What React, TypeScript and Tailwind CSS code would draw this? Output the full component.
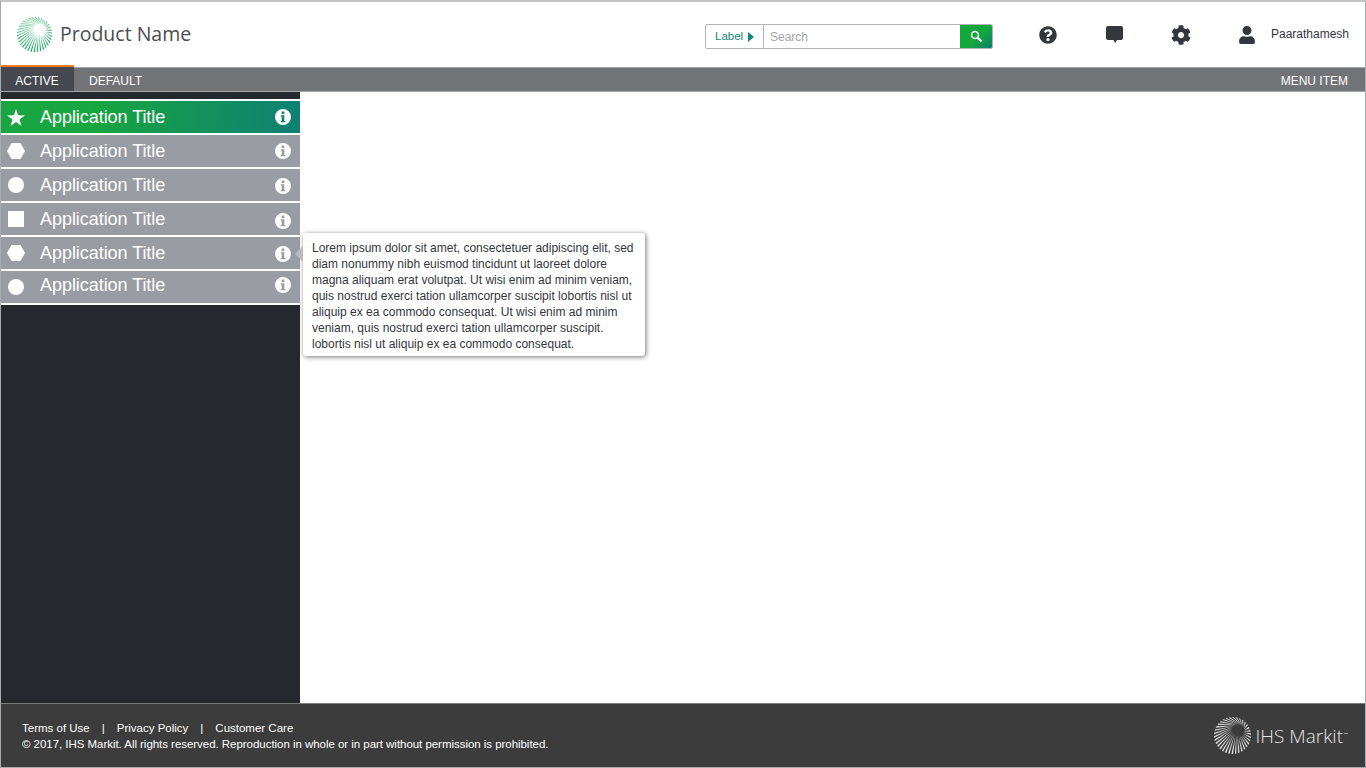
import React from "react";
import {FaCog, FaQuestionCircle, FaUser} from "react-icons/fa";

// sunburst mark used for the product logo and the footer logo
function Burst({size, className, color}: {size: number; className?: string; color: string}) {
    const rays = Array.from({length: 34}, (_, i) => {
        const a = (i / 34) * Math.PI * 2 - 1.0;
        const inner = a + 0.5;
        const w = 0.04;
        return [
            [23 + 5.4 * Math.cos(inner), 12.5 + 5.4 * Math.sin(inner)],
            [17.5 + 17.5 * Math.cos(a - w), 17.5 + 17.5 * Math.sin(a - w)],
            [17.5 + 17.5 * Math.cos(a + w), 17.5 + 17.5 * Math.sin(a + w)],
        ]
            .map((p) => p.join(","))
            .join(" ");
    });
    return (
        <svg width={size} height={size} viewBox="0 0 35 35" className={className} fill={color}>
            <defs>
                <linearGradient id="burstGreen" gradientUnits="userSpaceOnUse" x1="5" y1="0" x2="22" y2="35">
                    <stop offset="0" stopColor="#74c98f" />
                    <stop offset="1" stopColor="#14a564" />
                </linearGradient>
            </defs>
            {rays.map((points, i) => (
                <polygon key={i} points={points} />
            ))}
        </svg>
    );
}

function Hexagon() {
    return (
        <svg width="18" height="16" viewBox="0 0 18 16" fill="white" className="shrink-0">
            <polygon points="4.5,0 13.500,0 18,8 13.500,16 4.5,16 0,8" />
        </svg>
    );
}

function Star() {
    return (
        <svg width="18" height="17" viewBox="0 0 18 17" fill="white" className="shrink-0">
            <polygon points="9,0 11.100,6.300 18,6.500 12.500,10.500 14.600,17 9,13.100 3.400,17 5.500,10.500 0,6.500 6.900,6.300" />
        </svg>
    );
}

function Info({className}: {className: string}) {
    return (
        <svg width="16" height="16" viewBox="0 0 16 16" className={className} fill="white">
            <path
                fillRule="evenodd"
                d="M8 0a8 8 0 1 1 0 16A8 8 0 0 1 8 0zM8 2.300a1.500 1.500 0 1 0 0 3 1.500 1.500 0 0 0 0-3zM5.700 6.300v1.300h1v4.300h-1v1.300h4.600v-1.300h-1V6.300z"
            />
        </svg>
    );
}

const rows = [
    {icon: <Star />, textClass: "", infoClass: "", active: true},
    {icon: <Hexagon />, textClass: "", infoClass: ""},
    {icon: <span className="block h-4 w-4 shrink-0 rounded-full bg-white" />, textClass: "", infoClass: "mt-[2px]"},
    {icon: <span className="block h-4 w-4 shrink-0 bg-white" />, textClass: "", infoClass: "mt-[4px]"},
    {icon: <Hexagon />, textClass: "", infoClass: "mt-[2px]"},
    {icon: <span className="block h-4 w-4 shrink-0 rounded-full bg-white" />, textClass: "mb-[4px]", infoClass: "mb-[4px]"},
];

export default function App() {
    return (
        <div className="relative flex h-[768px] w-[1366px] flex-col overflow-hidden border-x border-t-2 border-b border-x-[#a9abae] border-t-[#c4c4c6] border-b-[#a9abae] bg-white font-['Liberation_Sans',sans-serif]">
            <header className="flex h-[65px] shrink-0 items-center pl-[16px]">
                <Burst size={35} color="url(#burstGreen)" className="shrink-0" />
                <span className="mb-[2px] ml-[8px] w-[132px] shrink-0 whitespace-nowrap font-['Open_Sans',sans-serif] text-[19.5px] text-[#4a4d52]">Product Name</span>
                <div className="ml-[513px] mt-[4px] flex h-[25px] w-[288px] shrink-0 items-stretch overflow-hidden rounded-[2px] border border-[#b1b3b9] text-[11.5px]">
                    <div className="flex w-[58px] items-center border-r border-[#b1b3b9] pl-[9px] text-[#16847a]">
                        Label
                        <svg width="6" height="10" viewBox="0 0 6 10" className="ml-[5px]" fill="#16847a">
                            <polygon points="0,0 6,5 0,10" />
                        </svg>
                    </div>
                    <div className="flex flex-1 items-center pl-[6px] pt-[1px] text-[12px] text-[#a3a5aa]">Search</div>
                    <div className="flex w-[32px] items-center justify-center bg-[linear-gradient(135deg,#14a83c_55%,#0d7f70)]">
                        <svg width="13" height="13" viewBox="0 0 13 13" fill="none" stroke="white">
                            <circle cx="5" cy="5" r="3.4" strokeWidth="1.5" />
                            <path d="M7.7 7.7 11.5 11.5" strokeWidth="2.2" />
                        </svg>
                    </div>
                </div>
                <FaQuestionCircle size={18} className="ml-[46px] shrink-0 text-[#33363b]" />
                <svg width="19" height="19" viewBox="0 0 19 19" className="ml-[48px] shrink-0" fill="#33363b">
                    <path d="M3 1h13a2 2 0 0 1 2 2v10a2 2 0 0 1-2 2h-4l-2 3-1.500-3H3a2 2 0 0 1-2-2V3a2 2 0 0 1 2-2z" />
                </svg>
                <FaCog size={20} className="ml-[47px] shrink-0 text-[#33363b]" />
                <FaUser size={18} className="ml-[47px] shrink-0 text-[#33363b]" />
                <span className="mb-[2px] ml-[15px] whitespace-nowrap text-[12px] text-[#33363b]">Paarathamesh</span>
            </header>

            <nav className="flex h-[25px] shrink-0 items-stretch border-y border-y-[#a5a7aa] bg-[#717377] text-[12px] text-white">
                <div className="-mt-[3px] flex w-[73px] items-center justify-center border-t-2 border-t-[#f47b20] bg-[#45484e] pr-[1px] pt-[4px]">ACTIVE</div>
                <div className="ml-[15px] flex items-center pt-[2px]">DEFAULT</div>
                <div className="ml-auto flex items-center pr-[17px] pt-[2px]">MENU ITEM</div>
            </nav>

            <div className="relative flex min-h-0 flex-1">
                <aside className="w-[299px] shrink-0 bg-[#25282d]">
                    <div className="h-[7px]" />
                    <div className="h-px bg-white" />
                    {rows.map((row, i) => (
                        <div
                            key={i}
                            className={`flex h-[34px] items-center border-y border-white pl-[6px] pr-[9px] text-[18px] tracking-[-0.05px] text-white ${row.active ? "bg-[linear-gradient(95deg,#17a63f_30%,#0e8074)]" : "bg-[#9a9ca3]"}`}
                        >
                            <span className="flex w-[18px] items-center justify-center">{row.icon}</span>
                            <span className={`ml-[15px] ${row.textClass}`}>Application Title</span>
                            <Info className={`ml-auto ${row.infoClass}`} />
                        </div>
                    ))}
                    <div className="h-px bg-white" />
                </aside>
                <main className="flex-1 bg-white" />

                <div className="absolute left-[302px] top-[141px] w-[342px] rounded-[3px] bg-white pb-[4px] pl-[9px] pr-[5px] pt-[7px] text-[12px] leading-[16px] text-[#33363b] shadow-[1px_1px_5px_rgba(0,0,0,0.55)]">
                    <span className="absolute -left-[8px] top-[13px] h-0 w-0 border-y-[8px] border-r-[8px] border-y-transparent border-r-[#b9bbc0]" />
                    Lorem ipsum dolor sit amet, consectetuer adipiscing elit, sed<br />
                    diam nonummy nibh euismod tincidunt ut laoreet dolore<br />
                    magna aliquam erat volutpat. Ut wisi enim ad minim veniam,<br />
                    quis nostrud exerci tation ullamcorper suscipit lobortis nisl ut<br />
                    aliquip ex ea commodo consequat. Ut wisi enim ad minim<br />
                    veniam, quis nostrud exerci tation ullamcorper suscipit.<br />
                    lobortis nisl ut aliquip ex ea commodo consequat.
                </div>
            </div>

            <footer className="flex h-[64px] shrink-0 items-center border-t border-t-[#7c7c7c] bg-[#3c3c3c] pl-[21px] pr-[17px] text-[11.5px] leading-[16px] text-white">
                <div>
                    <div className="flex">
                        <span>Terms of Use</span>
                        <span className="mx-[12px]">|</span>
                        <span>Privacy Policy</span>
                        <span className="mx-[12px]">|</span>
                        <span>Customer Care</span>
                    </div>
                    <div className="tracking-[-0.04px]">© 2017, IHS Markit. All rights reserved. Reproduction in whole or in part without permission is prohibited.</div>
                </div>
                <div className="ml-auto flex items-center text-[#e6e6e6]">
                    <Burst size={37} color="#e6e6e6" />
                    <span className="ml-[5px] whitespace-nowrap font-['Open_Sans',sans-serif] text-[19px] font-light">IHS Markit</span>
                    <span className="mb-[4px] ml-[1px] h-px w-[4px] bg-[#9a9a9a]" />
                </div>
            </footer>
        </div>
    );
}
